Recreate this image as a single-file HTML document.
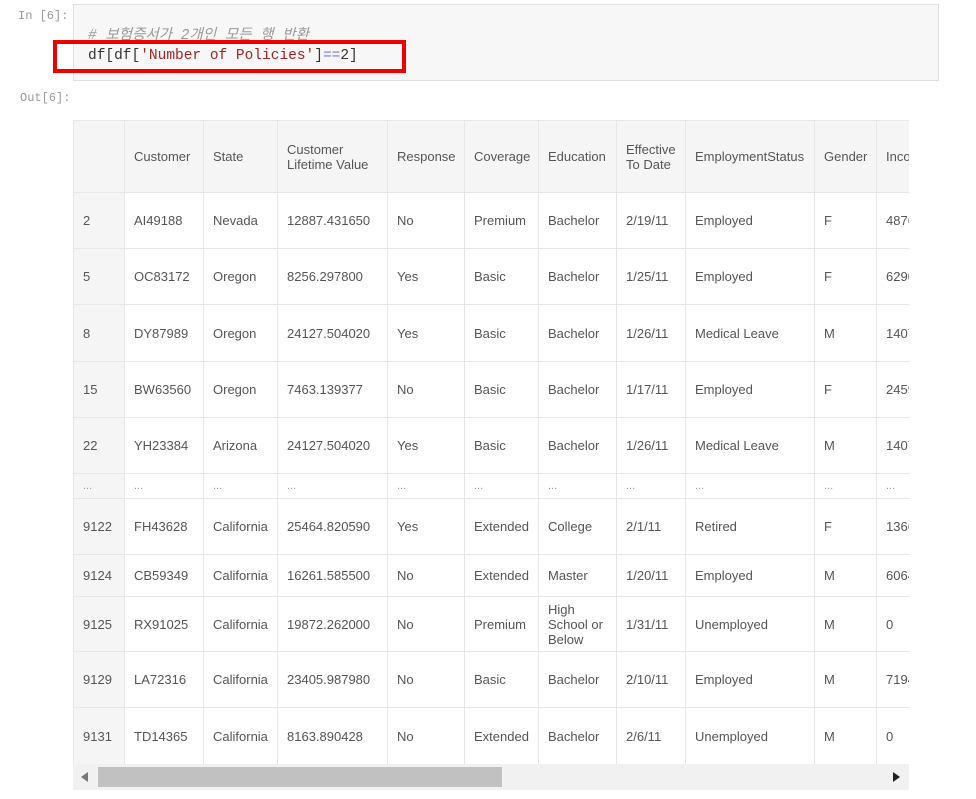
<!DOCTYPE html>
<html><head><meta charset="utf-8"><style>
body{margin:0;width:976px;height:799px;background:#fff;position:relative;overflow:hidden;font-family:"Liberation Sans","Noto Sans CJK KR",sans-serif;}
.mono{font-family:"Liberation Mono","Noto Sans CJK KR",monospace;}
.prompt{position:absolute;color:#999;font-size:12px;}
.cell{position:absolute;left:73px;top:4px;width:866px;height:77px;background:#f7f7f7;border:1px solid #e0e0e0;box-sizing:border-box;}
.red{position:absolute;left:53px;top:40px;width:353px;height:33px;border:4px solid #e00;box-sizing:border-box;}
.wrap{position:absolute;left:73px;top:120px;width:836px;height:644px;overflow:hidden;}
table{border-collapse:collapse;table-layout:fixed;width:863px;font-size:13px;color:#555;}
td,th{border:1px solid #e6e6e6;padding:0 9px;text-align:left;font-weight:normal;white-space:nowrap;overflow:hidden;vertical-align:middle;line-height:15px;}
th{background:#f5f5f5;}
td.i{background:#f5f5f5;}
tr.e td{font-size:11px;color:#999;}
.sb{position:absolute;left:73px;top:764px;width:836px;height:26px;background:#f1f1f1;}
.th{position:absolute;left:25px;top:3px;width:404px;height:20px;background:#c1c1c1;}
</style></head><body>
<div class="prompt mono" style="left:18px;top:9px;">In [6]:</div>
<div class="cell"></div>
<div class="mono" style="position:absolute;left:88px;top:23px;font-size:14.5px;color:#999;font-style:italic;"># 보험증서가 2개인 모든 행 반환</div>
<div class="mono" style="position:absolute;left:88px;top:48px;font-size:14.5px;color:#333;">df[df[<span style="color:#a22">'Number of Policies'</span>]<span style="color:#77f">==</span>2]</div>
<div class="red"></div>
<div class="prompt mono" style="left:20px;top:91px;">Out[6]:</div>
<div class="wrap"><table>
<colgroup><col style="width:51px"><col style="width:79px"><col style="width:74px"><col style="width:110px"><col style="width:77px"><col style="width:74px"><col style="width:78px"><col style="width:69px"><col style="width:129px"><col style="width:62px"><col style="width:60px"></colgroup>
<tr style="height:72px"><th></th><th>Customer</th><th>State</th><th>Customer<br>Lifetime Value</th><th>Response</th><th>Coverage</th><th>Education</th><th>Effective<br>To Date</th><th>EmploymentStatus</th><th>Gender</th><th>Income</th></tr>
<tr style="height:56px"><td class="i">2</td><td>AI49188</td><td>Nevada</td><td>12887.431650</td><td>No</td><td>Premium</td><td>Bachelor</td><td>2/19/11</td><td>Employed</td><td>F</td><td>48767</td></tr>
<tr style="height:56px"><td class="i">5</td><td>OC83172</td><td>Oregon</td><td>8256.297800</td><td>Yes</td><td>Basic</td><td>Bachelor</td><td>1/25/11</td><td>Employed</td><td>F</td><td>62902</td></tr>
<tr style="height:57px"><td class="i">8</td><td>DY87989</td><td>Oregon</td><td>24127.504020</td><td>Yes</td><td>Basic</td><td>Bachelor</td><td>1/26/11</td><td>Medical Leave</td><td>M</td><td>14072</td></tr>
<tr style="height:56px"><td class="i">15</td><td>BW63560</td><td>Oregon</td><td>7463.139377</td><td>No</td><td>Basic</td><td>Bachelor</td><td>1/17/11</td><td>Employed</td><td>F</td><td>24599</td></tr>
<tr style="height:56px"><td class="i">22</td><td>YH23384</td><td>Arizona</td><td>24127.504020</td><td>Yes</td><td>Basic</td><td>Bachelor</td><td>1/26/11</td><td>Medical Leave</td><td>M</td><td>14072</td></tr>
<tr class="e" style="height:25px"><td class="i">...</td><td>...</td><td>...</td><td>...</td><td>...</td><td>...</td><td>...</td><td>...</td><td>...</td><td>...</td><td>...</td></tr>
<tr style="height:56px"><td class="i">9122</td><td>FH43628</td><td>California</td><td>25464.820590</td><td>Yes</td><td>Extended</td><td>College</td><td>2/1/11</td><td>Retired</td><td>F</td><td>13663</td></tr>
<tr style="height:42px"><td class="i">9124</td><td>CB59349</td><td>California</td><td>16261.585500</td><td>No</td><td>Extended</td><td>Master</td><td>1/20/11</td><td>Employed</td><td>M</td><td>60646</td></tr>
<tr style="height:55px"><td class="i">9125</td><td>RX91025</td><td>California</td><td>19872.262000</td><td>No</td><td>Premium</td><td>High<br>School or<br>Below</td><td>1/31/11</td><td>Unemployed</td><td>M</td><td>0</td></tr>
<tr style="height:56px"><td class="i">9129</td><td>LA72316</td><td>California</td><td>23405.987980</td><td>No</td><td>Basic</td><td>Bachelor</td><td>2/10/11</td><td>Employed</td><td>M</td><td>71941</td></tr>
<tr style="height:57px"><td class="i">9131</td><td>TD14365</td><td>California</td><td>8163.890428</td><td>No</td><td>Extended</td><td>Bachelor</td><td>2/6/11</td><td>Unemployed</td><td>M</td><td>0</td></tr>
</table></div>
<div class="sb"><div class="th"></div>
<svg style="position:absolute;left:8px;top:8px" width="8" height="10"><path d="M7 0L0 5L7 10Z" fill="#777"/></svg>
<svg style="position:absolute;left:820px;top:8px" width="8" height="10"><path d="M0 0L7 5L0 10Z" fill="#222"/></svg>
</div>
</body></html>
